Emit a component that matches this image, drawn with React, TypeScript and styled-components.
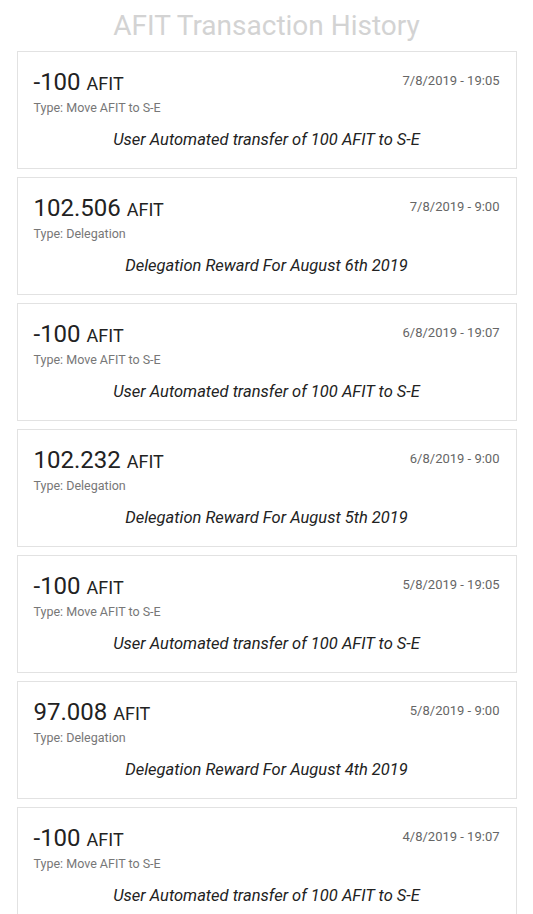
import React from "react";
import styled, { createGlobalStyle } from "styled-components";

const Global = createGlobalStyle`
  html, body { margin: 0; padding: 0; background: #fff; }
  body { font-family: Roboto, "Noto Sans", sans-serif; }
`;

const Page = styled.div`
  width: 533px;
  display: flex;
  flex-direction: column;
  align-items: center;
`;

const Title = styled.h1`
  margin: 0;
  height: 51px;
  font-family: Roboto, sans-serif;
  font-weight: 400;
  font-size: 28px;
  line-height: 52px;
  color: #d3d3d3;
  text-align: center;
`;

const List = styled.div`
  width: 500px;
  display: flex;
  flex-direction: column;
  gap: 8px;
`;

const Card = styled.div`
  box-sizing: border-box;
  height: 118px;
  border: 1px solid #e2e2e2;
  background: #fff;
  padding: 15px 16px 0 16px;
  display: flex;
  flex-direction: column;
`;

const Header = styled.div`
  display: flex;
  justify-content: space-between;
  align-items: flex-start;
`;

const Amount = styled.div`
  font-size: 24px;
  line-height: 30px;
  color: #222;
`;

const Unit = styled.span`
  font-size: 18px;
  margin-left: 6px;
`;

const DateText = styled.div`
  font-size: 13px;
  line-height: 16px;
  color: #666;
  padding-top: 6px;
`;

const TypeText = styled.div`
  font-size: 12.5px;
  line-height: 16px;
  color: #777;
  margin-top: 1px;
`;

const Desc = styled.div`
  margin-top: 14px;
  font-size: 16.5px;
  line-height: 20px;
  font-style: italic;
  color: #222;
  text-align: center;
`;

type Tx = { amount: string; date: string; type: string; desc: string };

const txs: Tx[] = [
  { amount: "-100", date: "7/8/2019 - 19:05", type: "Move AFIT to S-E", desc: "User Automated transfer of 100 AFIT to S-E" },
  { amount: "102.506", date: "7/8/2019 - 9:00", type: "Delegation", desc: "Delegation Reward For August 6th 2019" },
  { amount: "-100", date: "6/8/2019 - 19:07", type: "Move AFIT to S-E", desc: "User Automated transfer of 100 AFIT to S-E" },
  { amount: "102.232", date: "6/8/2019 - 9:00", type: "Delegation", desc: "Delegation Reward For August 5th 2019" },
  { amount: "-100", date: "5/8/2019 - 19:05", type: "Move AFIT to S-E", desc: "User Automated transfer of 100 AFIT to S-E" },
  { amount: "97.008", date: "5/8/2019 - 9:00", type: "Delegation", desc: "Delegation Reward For August 4th 2019" },
  { amount: "-100", date: "4/8/2019 - 19:07", type: "Move AFIT to S-E", desc: "User Automated transfer of 100 AFIT to S-E" },
];

export default function App() {
  return (
    <Page>
      <Global />
      <Title>AFIT Transaction History</Title>
      <List>
        {txs.map((t, i) => (
          <Card key={i}>
            <Header>
              <Amount>
                {t.amount}
                <Unit>AFIT</Unit>
              </Amount>
              <DateText>{t.date}</DateText>
            </Header>
            <TypeText>Type: {t.type}</TypeText>
            <Desc>{t.desc}</Desc>
          </Card>
        ))}
      </List>
    </Page>
  );
}
